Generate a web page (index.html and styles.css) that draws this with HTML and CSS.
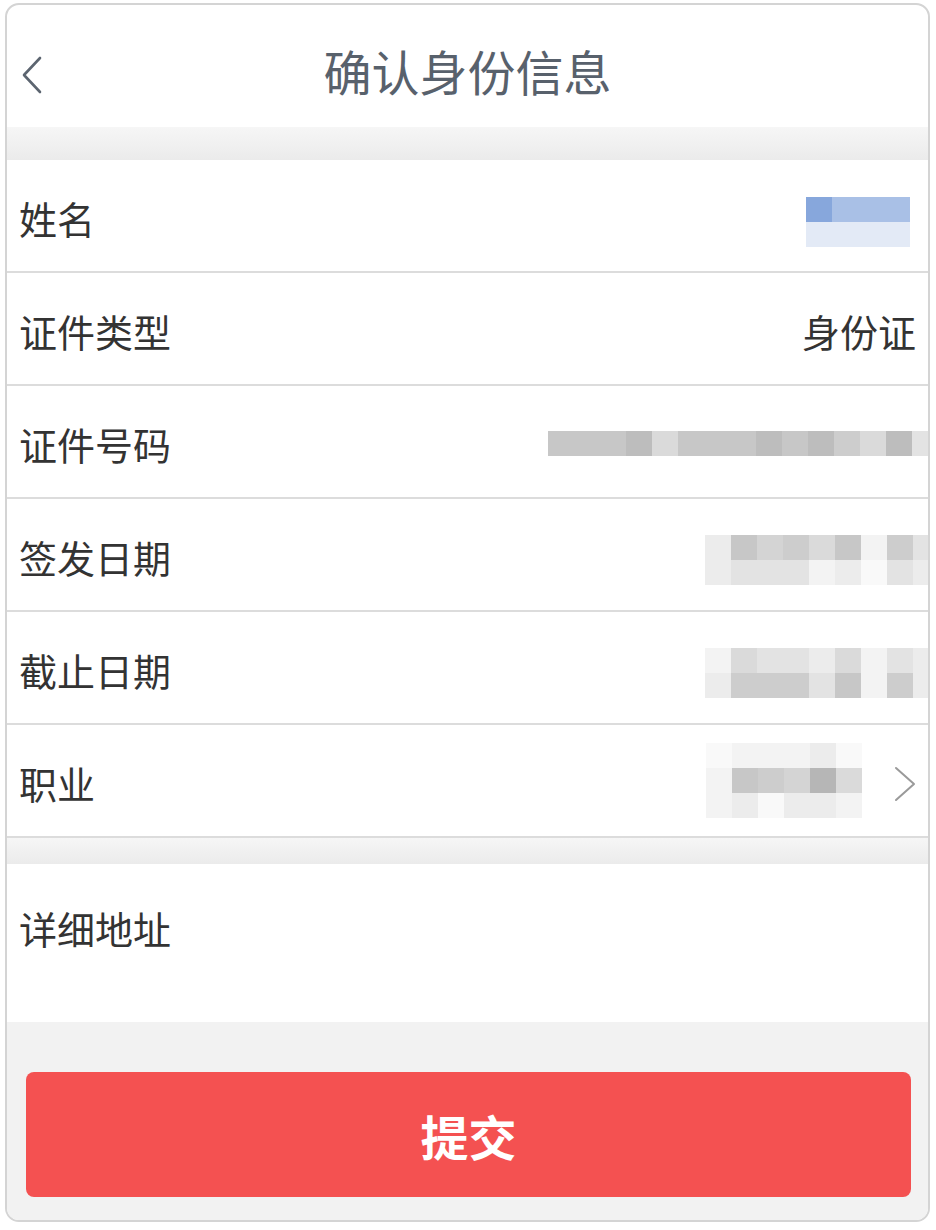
FILE: index.html
```html
<!DOCTYPE html>
<html lang="zh-CN">
<head>
    <meta charset="utf-8">
    <title>确认身份信息</title>
    <link rel="stylesheet" href="styles.css">
</head>
<body>
    <div class="ramec">
        <div class="hlavicka">
            <svg class="spat" width="24" height="40" viewBox="0 0 24 40">
                <polyline points="20,3 4,20 20,37" fill="none" stroke="#5c6570" stroke-width="2.6" stroke-linecap="round" stroke-linejoin="round"/>
            </svg>
            <span class="nadpis">确认身份信息</span>
        </div>

        <div class="medzera horna"></div>

        <div class="riadok">
            <span class="popis">姓名</span>
            <div class="mozaika meno">
                <div class="pas"><i class="m1"></i><i class="m2"></i><i class="m2"></i><i class="m2"></i></div>
                <div class="pas"><i class="m3"></i><i class="m3"></i><i class="m3"></i><i class="m3"></i></div>
            </div>
        </div>

        <div class="riadok">
            <span class="popis">证件类型</span>
            <span class="hodnota">身份证</span>
        </div>

        <div class="riadok">
            <span class="popis">证件号码</span>
            <div class="mozaika cislo">
                <div class="pas">
                    <i class="c4"></i><i class="c4"></i><i class="c4"></i><i class="c3"></i><i class="c7"></i><i class="c4"></i><i class="c4"></i><i class="c4"></i><i class="c3"></i><i class="c4"></i><i class="c3"></i><i class="c5"></i><i class="c7"></i><i class="c3"></i><i class="c8"></i>
                </div>
            </div>
        </div>

        <div class="riadok">
            <span class="popis">签发日期</span>
            <div class="mozaika datum">
                <div class="pas"><i class="c9"></i><i class="c4"></i><i class="c6"></i><i class="c5"></i><i class="c7"></i><i class="c4"></i><i class="c10"></i><i class="c5"></i><i class="c8"></i></div>
                <div class="pas"><i class="c9"></i><i class="c8"></i><i class="c8"></i><i class="c8"></i><i class="c10"></i><i class="c9"></i><i class="c11"></i><i class="c8"></i><i class="c9"></i></div>
            </div>
        </div>

        <div class="riadok">
            <span class="popis">截止日期</span>
            <div class="mozaika datum">
                <div class="pas"><i class="c10"></i><i class="c7"></i><i class="c8"></i><i class="c8"></i><i class="c9"></i><i class="c7"></i><i class="c10"></i><i class="c8"></i><i class="c9"></i></div>
                <div class="pas"><i class="c9"></i><i class="c5"></i><i class="c5"></i><i class="c5"></i><i class="c8"></i><i class="c4"></i><i class="c10"></i><i class="c5"></i><i class="c9"></i></div>
            </div>
        </div>

        <div class="riadok">
            <span class="popis">职业</span>
            <div class="pravy">
                <div class="mozaika">
                    <div class="pas"><i class="c11"></i><i class="c10"></i><i class="c10"></i><i class="c10"></i><i class="c9"></i><i class="c11"></i></div>
                    <div class="pas"><i class="c10"></i><i class="c4"></i><i class="c5"></i><i class="c6"></i><i class="c2"></i><i class="c7"></i></div>
                    <div class="pas"><i class="c10"></i><i class="c9"></i><i class="c11"></i><i class="c9"></i><i class="c9"></i><i class="c10"></i></div>
                </div>
                <svg class="dalej" width="26" height="38" viewBox="0 0 26 38">
                    <polyline points="4,3 22,19 4,35" fill="none" stroke="#9a9a9a" stroke-width="2" stroke-linecap="round" stroke-linejoin="round"/>
                </svg>
            </div>
        </div>

        <div class="medzera dolna"></div>

        <div class="adresa">
            <span class="popis">详细地址</span>
        </div>

        <div class="spodok">
            <button class="odoslat">提交</button>
        </div>
    </div>
</body>
</html>
```

FILE: styles.css
```css
body {
    margin: 0;
    background-color: white;
    font-family: "Noto Sans CJK SC", "Noto Sans", sans-serif;
}

.ramec {
    margin: 3px 6px 0 5px;
    height: 1215px;
    border: 2px solid #d4d4d4;
    border-radius: 14px;
    overflow: hidden;
    display: flex;
    flex-direction: column;
    background-color: white;
}

.hlavicka {
    height: 122px;
    position: relative;
    display: flex;
    align-items: center;
    justify-content: center;
    flex-shrink: 0;
}

.spat {
    position: absolute;
    left: 13px;
    top: 50px;
}

.nadpis {
    font-size: 48px;
    color: #58616c;
    margin-top: 8px;
}

.medzera {
    flex-shrink: 0;
    background: linear-gradient(#f6f6f6, #ebebeb);
}

.medzera.horna {
    height: 33px;
}

.medzera.dolna {
    height: 26px;
}

.riadok {
    height: 111px;
    border-bottom: 2px solid #dcdcdc;
    display: flex;
    align-items: center;
    justify-content: space-between;
    padding: 0 12px 0 12px;
    flex-shrink: 0;
}

.riadok:last-of-type {
    border-bottom: none;
}

.popis {
    font-size: 38px;
    color: #333333;
    margin-top: 4px;
}

.hodnota {
    font-size: 38px;
    color: #333333;
    margin-top: 4px;
}

.pravy {
    display: flex;
    align-items: center;
    gap: 30px;
    margin-right: -2px;
}

.dalej {
    margin-top: 6px;
}

.mozaika {
    display: flex;
    flex-direction: column;
}

.mozaika.meno {
    margin-right: 6px;
    margin-top: 12px;
}

.mozaika.cislo {
    margin-right: -22px;
    margin-top: 4px;
}

.mozaika.datum {
    margin-right: -23px;
    margin-top: 10px;
}

.pas {
    display: flex;
}

.pas i {
    display: block;
    width: 26px;
    height: 25px;
}

.m1 { background-color: #87a7dc; }
.m2 { background-color: #a9c0e6; }
.m3 { background-color: #e3eaf6; }

.c2 { background-color: #b6b6b6; }
.c3 { background-color: #bdbdbd; }
.c4 { background-color: #c7c7c7; }
.c5 { background-color: #cdcdcd; }
.c6 { background-color: #d4d4d4; }
.c7 { background-color: #dadada; }
.c8 { background-color: #e3e3e3; }
.c9 { background-color: #ececec; }
.c10 { background-color: #f3f3f3; }
.c11 { background-color: #f9f9f9; }

.adresa {
    height: 158px;
    padding: 36px 12px 0 12px;
    box-sizing: border-box;
    flex-shrink: 0;
}

.spodok {
    flex-grow: 1;
    background-color: #f2f2f2;
    padding: 50px 17px 0 19px;
}

.odoslat {
    width: 100%;
    height: 125px;
    border: none;
    border-radius: 8px;
    background-color: #f45151;
    color: white;
    font-family: "Noto Sans CJK SC", "Noto Sans", sans-serif;
    font-size: 48px;
    font-weight: bold;
    cursor: pointer;
}
```
